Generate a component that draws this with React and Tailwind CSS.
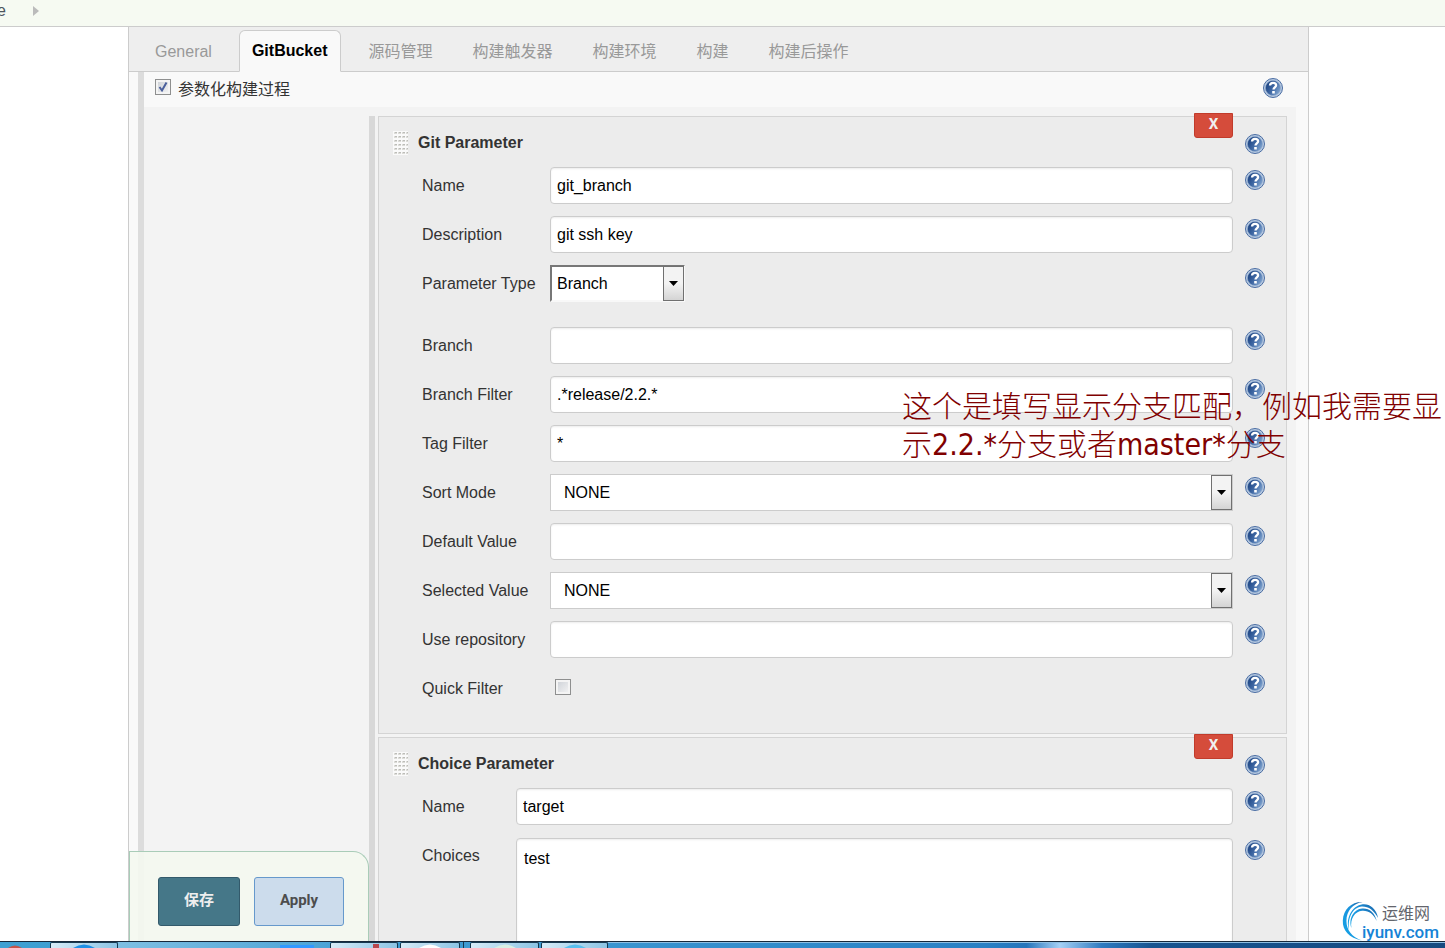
import React, { useState } from 'react';
import clsx from 'clsx';

const TABS = ['General', 'GitBucket', '源码管理', '构建触发器', '构建环境', '构建', '构建后操作'];

const HelpButton = ({ topic, className }) => (
    <button type="button" aria-label={`Help for feature: ${topic}`} className={clsx('block h-5 w-5 shrink-0', className)}>
        <svg viewBox="0 0 20 20" width="20" height="20" aria-hidden="true">
            <defs>
                <linearGradient id="helpFill" x1="0" y1="0.2" x2="1" y2="0.8">
                    <stop offset="0.1" stopColor="#1f4684" />
                    <stop offset="0.5" stopColor="#3f68a4" />
                    <stop offset="1" stopColor="#86aad4" />
                </linearGradient>
            </defs>
            <circle cx="10" cy="10" r="9.5" fill="#b9cbe2" stroke="#4a6da3" strokeWidth="1" />
            <circle cx="10" cy="10" r="7.6" fill="url(#helpFill)" stroke="#8fa9cd" strokeWidth="0.6" />
            <path d="M7 7.500C7.200 5.600 8.400 4.800 10 4.800c1.800 0 3.100.9 3.100 2.500 0 2.100-2.600 2.100-2.600 4.300" fill="none" stroke="#fff" strokeWidth="2.300" />
            <rect x="9.200" y="13" width="2.600" height="2.500" fill="#fff" />
        </svg>
    </button>
);

const DragHandle = () => (
    <svg width="15" height="24" viewBox="0 0 15 24" aria-hidden="true" className="mr-2.5 shrink-0">
        <defs>
            <pattern id="grip" width="4" height="4" patternUnits="userSpaceOnUse">
                <rect width="4" height="4" fill="#fafafa" />
                <rect x="1" y="1" width="3" height="2" fill="#dcdcd8" />
                <rect x="2" y="1" width="2" height="1" fill="#bcbcb8" />
            </pattern>
        </defs>
        <rect width="15" height="24" fill="url(#grip)" />
    </svg>
);

// One line of a parameter block: label, control, help icon
const Row = ({ id, label, wide, children }) => (
    <div className="flex items-start pb-3">
        <label htmlFor={id} className={clsx('h-[37px] shrink-0 leading-[37px]', wide ? 'w-32' : 'w-[94px]')}>{label}</label>
        <div className="min-w-0 flex-1">{children}</div>
        <HelpButton topic={label} className="mt-[3px] ml-3" />
    </div>
);

const TextInput = ({ id, value }) => (
    <input
        id={id}
        type="text"
        defaultValue={value}
        className="block h-[37px] w-full rounded border border-[#ccc] bg-white px-1.5 text-black shadow-[inset_0_1px_2px_rgba(0,0,0,0.08)] outline-none"
    />
);

const SelectArrow = () => (
    <span className="pointer-events-none absolute top-px right-px bottom-px flex w-[21px] items-center justify-center border border-[#707070] bg-linear-to-b from-[#f3f3f3] from-50% to-[#d4d4d4]">
        <svg width="9" height="5" viewBox="0 0 9 5" aria-hidden="true"><path d="M0 0h9L4.500 5z" fill="#000" /></svg>
    </span>
);

const WideSelect = ({ id }) => (
    <div className="relative">
        <select id={id} defaultValue="NONE" className="block h-[37px] w-full appearance-none border border-[#ccc] bg-white pl-[13px] text-black outline-none">
            <option>NONE</option>
        </select>
        <SelectArrow />
    </div>
);

const checkboxStyle = 'block h-4 w-4 appearance-none border border-[#8e8f8f] bg-linear-to-br from-[#cbcfd5] to-[#f6f6f6] shadow-[inset_0_0_0_2px_#f4f4f4]';

const ParameterPanel = ({ title, children }) => (
    <section className="relative border border-[#d4d4d4] bg-[#ececec] pr-[21px] pb-3.5 pl-[43px]">
        <button type="button" className="absolute -top-1 right-[53px] h-[25px] w-[39px] rounded-b-[3px] border border-[#c13b2b] bg-[#d54c3b] pb-0.5 font-[Roboto,sans-serif] text-[15px] leading-none font-bold text-[#f0f0f0]">X</button>
        <header className="-ml-[29px] flex h-[50px] items-center pt-0.5">
            <DragHandle />
            <h2 className="flex-1 font-bold">{title}</h2>
            <HelpButton topic={title} className="mt-0.5" />
        </header>
        {children}
    </section>
);

const SiteLogo = () => (
    <div className="absolute right-1.5 bottom-[7px] flex h-10 items-end">
        <svg width="38" height="40" viewBox="0 0 42 40" preserveAspectRatio="none" aria-hidden="true" className="-mr-[17px]">
            <defs>
                <linearGradient id="swirl" x1="0" y1="1" x2="1" y2="0">
                    <stop offset="0" stopColor="#12a5e8" />
                    <stop offset="0.6" stopColor="#1b93dc" />
                    <stop offset="1" stopColor="#1d5c9e" />
                </linearGradient>
            </defs>
            <path d="M23 39.500C9 37 1.500 29.500 2 19.500 2.500 8 12 .5 24 1 13 2.500 6 10 6 20c0 9 6 16 17 19.500z" fill="url(#swirl)" />
            <path d="M9 29C4.500 18 12 4.500 24 3.200c7.500-.6 15 4 17 13.800C36 9 30.500 5.300 23 5.500 13 6.200 7 17 9 29z" fill="url(#swirl)" />
            <path d="M11.500 27C8 18 14 8 23.500 7.500 31 7 37.500 11.500 39.500 20c-4-7-8.500-10.500-16-10.200C15 10.300 10 18 11.500 27z" fill="url(#swirl)" />
        </svg>
        <div className="font-[Roboto,'Noto_Sans_CJK_SC',sans-serif] leading-[18px]">
            <div className="pl-5 text-base leading-[18px] text-[#63656c]">运维网</div>
            <div className="text-[17px] leading-[18px] font-medium text-[#1583d6]">iyunv.com</div>
        </div>
    </div>
);

const TaskButton = ({ className, children }) => (
    <span className={clsx('flex h-full items-end justify-center rounded-t-xs border-x border-t border-[#16384f] bg-linear-to-r from-[#d6ebf7] to-[#8cc4e4]', className)}>{children}</span>
);

const Dome = ({ color }) => (
    <svg width="22" height="4" viewBox="0 0 22 4" aria-hidden="true"><path d="M0 4Q11-3 22 4z" fill={color} /></svg>
);

const Taskbar = () => (
    <footer className="relative z-20 flex h-[7px] shrink-0 border-t border-[#16283a] bg-linear-to-r from-[#3fa0d2] via-[#3a94cf] via-60% to-[#164b82]">
        <span className="flex w-[50px] items-end pl-2"><svg width="14" height="3" viewBox="0 0 14 3" aria-hidden="true"><path d="M0 3Q7-2 14 3z" fill="#c4544a" /></svg></span>
        <TaskButton className="w-[68px]"><Dome color="#1e90e6" /></TaskButton>
        <span className="flex w-[212px] items-end bg-linear-to-r from-[#7ebfe2] to-[#4ba3d6] pl-[162px]"><span className="h-[3px] w-[34px] bg-[#3399ff]" /></span>
        <TaskButton className="w-[68px] pl-6"><span className="h-1 w-1.5 bg-[#b8474d]" /></TaskButton>
        <TaskButton className="ml-0.5 w-[60px]"><Dome color="#ffffff" /></TaskButton>
        <span className="w-1 border-r border-[#16384f]" />
        <TaskButton className="ml-1.5 w-[69px]"><Dome color="#d8efe4" /></TaskButton>
        <TaskButton className="ml-0.5 w-[67px]"><Dome color="#58bfee" /></TaskButton>
        <span className="h-full flex-1 border-t border-[#8fbfe3] bg-[linear-gradient(90deg,#3a95d0,#2a80c4_45%,#2675bb_50%,#a5d0f5_54%,#2e7ac0_59%,#185490_65%,#164a80)]" />
    </footer>
);

const App = () => {
    const [activeTab, setActiveTab] = useState('GitBucket');

    return (
        <div className="relative flex h-screen flex-col overflow-hidden bg-white font-['Liberation_Sans','Noto_Sans_CJK_SC',sans-serif] text-base text-[#333]">
            {/* Breadcrumb */}
            <nav className="flex h-[27px] shrink-0 items-center border-b border-[#ccc] bg-[#f6faf2] pb-[5px]">
                <a href="#" className="-ml-[3px] w-9 text-[#4d545d]">e</a>
                <svg width="6" height="10" viewBox="0 0 6 10" aria-hidden="true"><path d="M0 0l6 5-6 5z" fill="#bbb" /></svg>
            </nav>

            <main className="relative mr-[136px] ml-32 flex min-h-0 flex-1 flex-col overflow-hidden border-x border-[#ccc] bg-[#f9f9f9]">
                {/* Tabs */}
                <div role="tablist" className="flex h-[45px] shrink-0 items-end border-b border-[#ccc] bg-[#eee] pl-[13px]">
                    {TABS.map(tab => (
                        <button
                            key={tab}
                            type="button"
                            role="tab"
                            aria-selected={tab === activeTab}
                            onClick={() => setActiveTab(tab)}
                            className={clsx(
                                '-mb-px h-[42px] border px-3 whitespace-nowrap',
                                tab === activeTab
                                    ? 'mr-3.5 rounded-t-md border-[#ccc] border-b-[#f9f9f9] bg-[#f9f9f9] font-bold text-black'
                                    : 'mr-[13px] border-transparent pt-0.5 text-[#999] first:mr-3.5 not-first:ml-px'
                            )}
                        >
                            {tab}
                        </button>
                    ))}
                </div>

                <form className="flex min-h-0 flex-1 pr-3 pl-[9px]" onSubmit={e => e.preventDefault()}>
                    <div className="flex min-w-0 flex-1 flex-col border-l-6 border-[#dcdcdc]">
                        <div className="flex h-[35px] shrink-0 items-center pr-[13px] pl-[11px]">
                            <span className="relative mr-[7px] mb-1.5">
                                <input id="parameterized" type="checkbox" defaultChecked className={clsx(checkboxStyle, 'peer')} />
                                <svg width="16" height="16" viewBox="0 0 16 16" aria-hidden="true" className="pointer-events-none absolute inset-0 hidden peer-checked:block">
                                    <path d="M4.500 8l2.500 3.500 4.500-8" fill="none" stroke="#4a5f9c" strokeWidth="2" />
                                </svg>
                            </span>
                            <label htmlFor="parameterized" className="flex-1">参数化构建过程</label>
                            <HelpButton topic="参数化构建过程" className="mb-1" />
                        </div>

                        <div className="flex flex-1 bg-[#f3f3f3] pt-[9px] pr-[9px] pl-[225px]">
                            <div className="flex min-w-0 flex-1 flex-col gap-[3px] border-l-6 border-[#d8d8d8] pl-[3px]">
                                <ParameterPanel title="Git Parameter">
                                    <Row id="git-name" label="Name" wide><TextInput id="git-name" value="git_branch" /></Row>
                                    <Row id="git-desc" label="Description" wide><TextInput id="git-desc" value="git ssh key" /></Row>
                                    <div className="pb-[13px]">
                                        <Row id="git-type" label="Parameter Type" wide>
                                            <div className="relative w-[135px]">
                                                <select id="git-type" defaultValue="Branch" className="block h-[37px] w-full appearance-none border-2 border-[#f8f8f8] border-t-[#777] border-l-[#777] bg-white pl-[5px] text-black outline-none">
                                                    <option>Branch</option>
                                                    <option>Tag</option>
                                                </select>
                                                <SelectArrow />
                                            </div>
                                        </Row>
                                    </div>
                                    <Row id="git-branch" label="Branch" wide><TextInput id="git-branch" value="" /></Row>
                                    <Row id="branch-filter" label="Branch Filter" wide><TextInput id="branch-filter" value=".*release/2.2.*" /></Row>
                                    <Row id="tag-filter" label="Tag Filter" wide><TextInput id="tag-filter" value="*" /></Row>
                                    <Row id="sort-mode" label="Sort Mode" wide><WideSelect id="sort-mode" /></Row>
                                    <Row id="default-value" label="Default Value" wide><TextInput id="default-value" value="" /></Row>
                                    <Row id="selected-value" label="Selected Value" wide><WideSelect id="selected-value" /></Row>
                                    <Row id="use-repository" label="Use repository" wide><TextInput id="use-repository" value="" /></Row>
                                    <Row id="quick-filter" label="Quick Filter" wide>
                                        <div className="pt-[9px] pl-[5px]"><input id="quick-filter" type="checkbox" className={checkboxStyle} /></div>
                                    </Row>
                                </ParameterPanel>

                                <ParameterPanel title="Choice Parameter">
                                    <Row id="choice-name" label="Name"><TextInput id="choice-name" value="target" /></Row>
                                    <Row id="choices" label="Choices">
                                        <textarea
                                            id="choices"
                                            rows={6}
                                            defaultValue="test"
                                            className="mt-px block w-full resize-none rounded border border-[#ccc] bg-white px-[7px] py-2 leading-6 text-black shadow-[inset_0_1px_2px_rgba(0,0,0,0.08)] outline-none"
                                        />
                                    </Row>
                                </ParameterPanel>
                            </div>
                        </div>
                    </div>
                </form>

                {/* Save bar, stays above the form */}
                <div className="absolute bottom-0 left-0 z-10 flex w-60 gap-3.5 rounded-tr-2xl border border-b-0 border-[#a9ccb8] bg-[#f4f8ef]/90 pt-[25px] pb-[15px] pl-7 font-[Roboto,'Noto_Sans_CJK_SC',sans-serif] text-[15px] font-bold">
                    <button type="button" className="h-[49px] w-[82px] rounded-[3px] border border-[#335a6b] bg-[#457788] pb-0.5 text-[#eee]">保存</button>
                    <button type="button" className="h-[49px] w-[90px] rounded-[3px] border border-[#6699cc] bg-[#ccdcec] pb-0.5 text-[#4d4d4d]">Apply</button>
                </div>
            </main>

            {/* Note written over the form */}
            <p className="pointer-events-none absolute top-[385px] right-[2px] z-10 w-[541px] font-['Noto_Sans_CJK_SC',sans-serif] text-[30px] leading-[38px] font-light text-[#800000]">
                这个是填写显示分支匹配，例如我需要显示<span className="font-['DejaVu_Sans_Condensed','DejaVu_Sans',sans-serif] font-normal">2.2.*</span>分支或者<span className="font-['DejaVu_Sans_Condensed','DejaVu_Sans',sans-serif] font-normal">master*</span>分支
            </p>

            <SiteLogo />
            <Taskbar />
        </div>
    );
};

export default App;
